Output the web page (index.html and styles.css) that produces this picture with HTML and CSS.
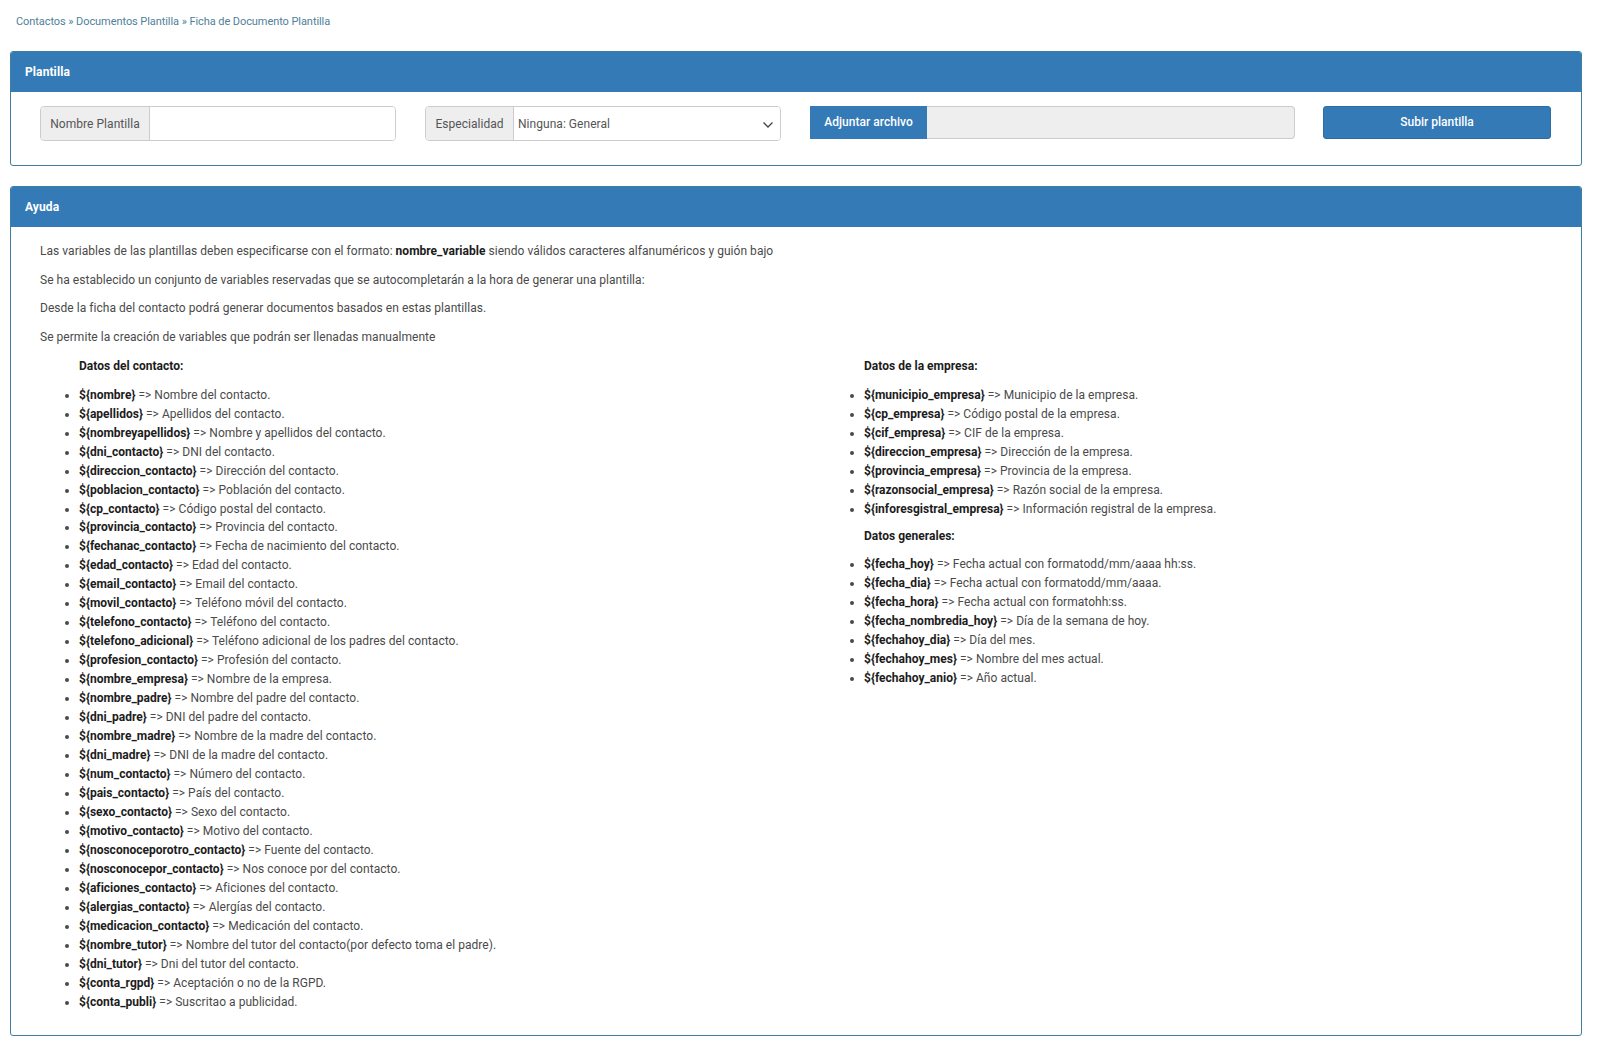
FILE: index.html
```html
<!DOCTYPE html>
<html lang="es">
<head>
<meta charset="utf-8">
<title>Ficha de Documento Plantilla</title>
<link rel="stylesheet" href="styles.css">
</head>
<body>
<nav class="crumbs"><a>Contactos</a> » <a>Documentos Plantilla</a> » <a>Ficha de Documento Plantilla</a></nav>
<section class="panel">
  <h2 class="panel-head">Plantilla</h2>
  <div class="panel-body form-row">
    <div class="group group-name"><span class="addon addon-name">Nombre Plantilla</span><input class="field" type="text"></div>
    <div class="group group-spec"><span class="addon addon-spec">Especialidad</span>
      <div class="field select">Ninguna: General
        <svg class="chev" width="12" height="8" viewBox="0 0 12 8"><path d="M1.5 1.5 6 6l4.5-4.5" fill="none" stroke="#444" stroke-width="1.3"/></svg>
      </div>
    </div>
    <div class="file"><span class="file-btn">Adjuntar archivo</span><span class="file-name"></span></div>
    <button class="submit" type="button">Subir plantilla</button>
  </div>
</section>
<section class="panel panel-help">
  <h2 class="panel-head">Ayuda</h2>
  <div class="panel-body help">
    <p>Las variables de las plantillas deben especificarse con el formato: <b>nombre_variable</b> siendo válidos caracteres alfanuméricos y guión bajo</p>
    <p>Se ha establecido un conjunto de variables reservadas que se autocompletarán a la hora de generar una plantilla:</p>
    <p>Desde la ficha del contacto podrá generar documentos basados en estas plantillas.</p>
    <p>Se permite la creación de variables que podrán ser llenadas manualmente</p>
    <div class="cols">
      <div>
        <p class="sub"><b>Datos del contacto:</b></p>
        <ul>
          <li><b>${nombre}</b> =&gt; Nombre del contacto.</li>
          <li><b>${apellidos}</b> =&gt; Apellidos del contacto.</li>
          <li><b>${nombreyapellidos}</b> =&gt; Nombre y apellidos del contacto.</li>
          <li><b>${dni_contacto}</b> =&gt; DNI del contacto.</li>
          <li><b>${direccion_contacto}</b> =&gt; Dirección del contacto.</li>
          <li><b>${poblacion_contacto}</b> =&gt; Población del contacto.</li>
          <li class="tight"><b>${cp_contacto}</b> =&gt; Código postal del contacto.</li>
          <li><b>${provincia_contacto}</b> =&gt; Provincia del contacto.</li>
          <li><b>${fechanac_contacto}</b> =&gt; Fecha de nacimiento del contacto.</li>
          <li><b>${edad_contacto}</b> =&gt; Edad del contacto.</li>
          <li><b>${email_contacto}</b> =&gt; Email del contacto.</li>
          <li><b>${movil_contacto}</b> =&gt; Teléfono móvil del contacto.</li>
          <li><b>${telefono_contacto}</b> =&gt; Teléfono del contacto.</li>
          <li><b>${telefono_adicional}</b> =&gt; Teléfono adicional de los padres del contacto.</li>
          <li><b>${profesion_contacto}</b> =&gt; Profesión del contacto.</li>
          <li><b>${nombre_empresa}</b> =&gt; Nombre de la empresa.</li>
          <li><b>${nombre_padre}</b> =&gt; Nombre del padre del contacto.</li>
          <li><b>${dni_padre}</b> =&gt; DNI del padre del contacto.</li>
          <li><b>${nombre_madre}</b> =&gt; Nombre de la madre del contacto.</li>
          <li><b>${dni_madre}</b> =&gt; DNI de la madre del contacto.</li>
          <li><b>${num_contacto}</b> =&gt; Número del contacto.</li>
          <li><b>${pais_contacto}</b> =&gt; País del contacto.</li>
          <li><b>${sexo_contacto}</b> =&gt; Sexo del contacto.</li>
          <li><b>${motivo_contacto}</b> =&gt; Motivo del contacto.</li>
          <li><b>${nosconoceporotro_contacto}</b> =&gt; Fuente del contacto.</li>
          <li><b>${nosconocepor_contacto}</b> =&gt; Nos conoce por del contacto.</li>
          <li><b>${aficiones_contacto}</b> =&gt; Aficiones del contacto.</li>
          <li><b>${alergias_contacto}</b> =&gt; Alergías del contacto.</li>
          <li><b>${medicacion_contacto}</b> =&gt; Medicación del contacto.</li>
          <li><b>${nombre_tutor}</b> =&gt; Nombre del tutor del contacto(por defecto toma el padre).</li>
          <li><b>${dni_tutor}</b> =&gt; Dni del tutor del contacto.</li>
          <li><b>${conta_rgpd}</b> =&gt; Aceptación o no de la RGPD.</li>
          <li><b>${conta_publi}</b> =&gt; Suscritao a publicidad.</li>
        </ul>
      </div>
      <div>
        <p class="sub"><b>Datos de la empresa:</b></p>
        <ul class="block">
          <li><b>${municipio_empresa}</b> =&gt; Municipio de la empresa.</li>
          <li><b>${cp_empresa}</b> =&gt; Código postal de la empresa.</li>
          <li><b>${cif_empresa}</b> =&gt; CIF de la empresa.</li>
          <li><b>${direccion_empresa}</b> =&gt; Dirección de la empresa.</li>
          <li><b>${provincia_empresa}</b> =&gt; Provincia de la empresa.</li>
          <li><b>${razonsocial_empresa}</b> =&gt; Razón social de la empresa.</li>
          <li><b>${inforesgistral_empresa}</b> =&gt; Información registral de la empresa.</li>
        </ul>
        <p class="sub sub-tight"><b>Datos generales:</b></p>
        <ul>
          <li><b>${fecha_hoy}</b> =&gt; Fecha actual con formatodd/mm/aaaa hh:ss.</li>
          <li><b>${fecha_dia}</b> =&gt; Fecha actual con formatodd/mm/aaaa.</li>
          <li><b>${fecha_hora}</b> =&gt; Fecha actual con formatohh:ss.</li>
          <li><b>${fecha_nombredia_hoy}</b> =&gt; Día de la semana de hoy.</li>
          <li><b>${fechahoy_dia}</b> =&gt; Día del mes.</li>
          <li><b>${fechahoy_mes}</b> =&gt; Nombre del mes actual.</li>
          <li><b>${fechahoy_anio}</b> =&gt; Año actual.</li>
        </ul>
      </div>
    </div>
  </div>
</section>
</body>
</html>
```
FILE: styles.css
```css
* { box-sizing: border-box; }
body {
  margin: 0;
  padding: 14px 18px 0 10px;
  background: #fff;
  color: #4a4a4a;
  font-family: Roboto, "Liberation Sans", sans-serif;
  font-size: 12px;
  line-height: 19px;
  letter-spacing: 0.04px;
}
b { color: #1c1c1c; font-weight: 700; letter-spacing: 0.02px; }
.crumbs {
  height: 37px;
  padding-left: 6px;
  padding-top: 1px;
  color: #4f7f99;
  font-size: 11px;
  line-height: 14px;
  letter-spacing: -0.07px;
}
.panel {
  border: 1px solid #3f7d9f;
  border-radius: 3px;
  height: 115px;
  overflow: hidden;
}
.panel-help { margin-top: 20px; height: 850px; }
.panel-head {
  margin: 0;
  height: 40px;
  padding: 0 14px;
  background: #337ab7;
  color: #fff;
  font-size: 12px;
  font-weight: 700;
  line-height: 40px;
  letter-spacing: 0.1px;
}
.panel-body { padding: 14px 29px; }
.form-row { display: flex; align-items: flex-start; }
.group {
  display: flex;
  height: 35px;
  border: 1px solid #ccc;
  border-radius: 4px;
  overflow: hidden;
  box-shadow: inset 0 1px 1px rgba(0,0,0,.05);
}
.group-name { width: 356px; margin-right: 29px; }
.group-spec { width: 356px; margin-right: 29px; }
.addon {
  display: flex;
  align-items: center;
  justify-content: center;
  padding-top: 2px;
  background: #eee;
  border-right: 1px solid #ccc;
  color: #555;
}
.addon-name { width: 109px; }
.addon-spec { width: 88px; }
.field {
  flex: 1;
  min-width: 0;
  border: 0;
  outline: 0;
  background: #fff;
  font: inherit;
}
.select {
  display: flex;
  align-items: center;
  justify-content: space-between;
  padding: 2px 6px 0 4px;
  color: #555;
}
.file {
  display: flex;
  width: 485px;
  height: 33px;
  margin-right: 28px;
}
.file-btn {
  width: 117px;
  background: #337ab7;
  color: #fff;
  font-weight: 500;
  text-align: center;
  line-height: 33px;
}
.file-name {
  flex: 1;
  background: #eee;
  border: 1px solid #ccc;
  border-left: 0;
  border-radius: 0 4px 4px 0;
}
.submit {
  width: 228px;
  height: 33px;
  padding: 0;
  border: 1px solid #2e6da4;
  border-radius: 3px;
  background: #337ab7;
  color: #fff;
  font: inherit;
  font-weight: 500;
}
.help { padding-top: 15px; }
.help p { margin: 0 0 9.6px; }
.help .sub { margin: 0 0 10px; padding-top: 1px; padding-left: 39px; }
.help .sub-tight { margin-bottom: 9px; }
.cols { display: grid; grid-template-columns: 784px 1fr; }
.cols > div + div .sub { padding-left: 40px; }
ul { margin: 0; padding-left: 39px; }
.cols > div + div ul { padding-left: 40px; }
.block { margin-bottom: 7px; }
.tight { height: 17.3px; }
```
